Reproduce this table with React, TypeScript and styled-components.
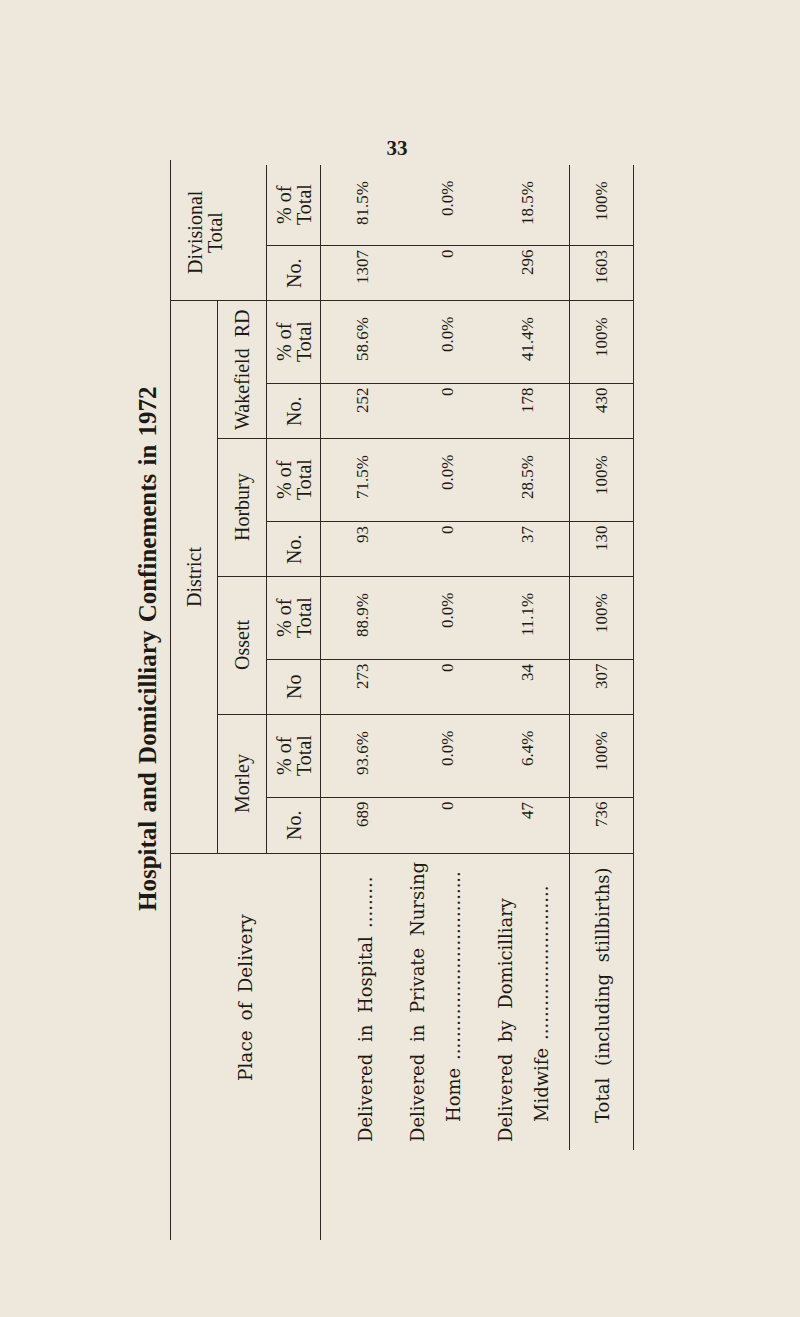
import React from "react";
import styled, { createGlobalStyle } from "styled-components";

const ink = "#1d1a16";
const rule = "1.5px solid #2d2823";

const GlobalStyle = createGlobalStyle`
  html, body {
    margin: 0;
    padding: 0;
    background: #eee8dc;
  }
  body {
    font-family: "Liberation Serif", "Times New Roman", serif;
    color: ${ink};
  }
`;

const Page = styled.div`
  width: 800px;
  height: 1317px;
  padding-top: 136px;
  box-sizing: border-box;
  background: #eee8dc;
  overflow: hidden;
`;

const PageNumber = styled.div`
  text-align: center;
  font-size: 21px;
  font-weight: 700;
  line-height: 24px;
  padding-right: 6px;
`;

// the printed table is turned on its side: vertical-rl + half turn reads bottom to top
const Sheet = styled.div`
  writing-mode: vertical-rl;
  transform: rotate(180deg);
  width: 515px;
  height: 1085px;
  margin-left: 125px;
`;

const Title = styled.h1`
  margin: 0;
  block-size: 45px;
  line-height: 45px;
  padding-inline-start: 107px;
  text-align: center;
  font-size: 25px;
  font-weight: 700;
  word-spacing: 2px;
  white-space: nowrap;
`;

const Table = styled.div`
  display: grid;
  grid-template-columns: 387px repeat(4, 56px 82px) 56px 80px;
  grid-template-rows: 47px 49px 54px 65px 90px 93px 65px;
  margin-inline-start: 5px;
  border-block-start: ${rule};
`;

const StubHead = styled.div`
  grid-column: 1;
  grid-row: 1 / 4;
  display: flex;
  align-items: center;
  justify-content: center;
  padding-inline-start: 98px;
  border-block-end: ${rule};
  border-inline-end: ${rule};
  font-family: "DejaVu Serif", serif;
  font-size: 18.5px;
  word-spacing: 4px;
`;

const DistrictHead = styled.div`
  grid-column: 2 / 10;
  grid-row: 1;
  display: flex;
  align-items: center;
  justify-content: center;
  border-block-end: ${rule};
  font-size: 20px;
`;

const DivisionHead = styled.div`
  grid-column: 10 / 12;
  grid-row: 1 / 3;
  padding-block-start: 14px;
  text-align: center;
  font-size: 20px;
  line-height: 20px;
  border-block-end: ${rule};
  border-inline-start: ${rule};
`;

const GroupName = styled.div<{ $col: number; $divide: boolean }>`
  grid-column: ${(p) => p.$col} / span 2;
  grid-row: 2;
  display: flex;
  align-items: center;
  justify-content: center;
  font-size: 20px;
  word-spacing: 6px;
  border-block-end: ${rule};
  border-inline-start: ${(p) => (p.$divide ? rule : "none")};
`;

const SubHead = styled.div<{ $col: number; $no: boolean; $divide: boolean }>`
  grid-column: ${(p) => p.$col};
  grid-row: 3;
  display: flex;
  align-items: center;
  justify-content: center;
  text-align: center;
  font-size: 20px;
  line-height: 20px;
  border-block-end: ${rule};
  border-inline-end: ${(p) => (p.$no ? rule : "none")};
  border-inline-start: ${(p) => (p.$divide ? rule : "none")};
`;

const Label = styled.div<{ $row: number; $pad: number }>`
  grid-column: 1;
  grid-row: ${(p) => p.$row};
  padding-inline-start: 98px;
  padding-inline-end: 8px;
  padding-block-start: ${(p) => p.$pad}px;
  border-inline-end: ${rule};
  font-family: "DejaVu Serif", serif;
  font-size: 18px;
  word-spacing: 6px;
`;

const TotalLabel = styled(Label)`
  margin-inline-start: 90px;
  padding-inline-start: 27px;
  border-block-start: ${rule};
  border-block-end: ${rule};
`;

const LabelLine = styled.div<{ $indent?: boolean }>`
  line-height: 36px;
  white-space: nowrap;
  padding-inline-start: ${(p) => (p.$indent ? 20 : 0)}px;
`;

const Leader = styled.span`
  margin-inline-start: 8px;
  letter-spacing: 0;
`;

const Figure = styled.div<{
  $row: number;
  $col: number;
  $no: boolean;
  $divide: boolean;
  $total: boolean;
  $pad: number;
}>`
  grid-column: ${(p) => p.$col};
  grid-row: ${(p) => p.$row};
  padding-block-start: ${(p) => p.$pad}px;
  padding-inline-end: ${(p) => (p.$no ? 4 : 16)}px;
  text-align: end;
  font-size: 17px;
  line-height: 24px;
  white-space: nowrap;
  border-inline-end: ${(p) => (p.$no ? rule : "none")};
  border-inline-start: ${(p) => (p.$divide ? rule : "none")};
  border-block-start: ${(p) => (p.$total ? rule : "none")};
  border-block-end: ${(p) => (p.$total ? rule : "none")};
`;

const groups = [
  { name: "Morley", no: "No." },
  { name: "Ossett", no: "No" },
  { name: "Horbury", no: "No." },
  { name: "Wakefield RD", no: "No." },
];

type Row = {
  lines: string[];
  dots: number;
  pad: number;
  figPad: number;
  values: string[][];
};

const rows: Row[] = [
  {
    lines: ["Delivered in Hospital"],
    dots: 9,
    pad: 27,
    figPad: 30,
    values: [
      ["689", "93.6%"],
      ["273", "88.9%"],
      ["93", "71.5%"],
      ["252", "58.6%"],
      ["1307", "81.5%"],
    ],
  },
  {
    lines: ["Delivered in Private Nursing", "Home"],
    dots: 33,
    pad: 14,
    figPad: 50,
    values: [
      ["0", "0.0%"],
      ["0", "0.0%"],
      ["0", "0.0%"],
      ["0", "0.0%"],
      ["0", "0.0%"],
    ],
  },
  {
    lines: ["Delivered by Domicilliary", "Midwife"],
    dots: 27,
    pad: 12,
    figPad: 40,
    values: [
      ["47", "6.4%"],
      ["34", "11.1%"],
      ["37", "28.5%"],
      ["178", "41.4%"],
      ["296", "18.5%"],
    ],
  },
];

const totals = [
  ["736", "100%"],
  ["307", "100%"],
  ["130", "100%"],
  ["430", "100%"],
  ["1603", "100%"],
];

const Figures = ({
  values,
  row,
  pad,
  total,
}: {
  values: string[][];
  row: number;
  pad: number;
  total: boolean;
}) => (
  <>
    {values.map(([no, pct], g) => (
      <React.Fragment key={g}>
        <Figure $row={row} $col={2 + g * 2} $no $divide={g > 0} $total={total} $pad={pad}>
          {no}
        </Figure>
        <Figure $row={row} $col={3 + g * 2} $no={false} $divide={false} $total={total} $pad={pad}>
          {pct}
        </Figure>
      </React.Fragment>
    ))}
  </>
);

const PercentHead = () => (
  <>
    % of
    <br />
    Total
  </>
);

export default function App() {
  return (
    <Page>
      <GlobalStyle />
      <PageNumber>33</PageNumber>
      <Sheet>
        <Title>Hospital and Domicilliary Confinements in 1972</Title>
        <Table>
          <StubHead>Place of Delivery</StubHead>
          <DistrictHead>District</DistrictHead>
          <DivisionHead>
            Divisional
            <br />
            Total
          </DivisionHead>

          {groups.map((g, i) => (
            <GroupName key={g.name} $col={2 + i * 2} $divide={i > 0}>
              {g.name}
            </GroupName>
          ))}

          {[...groups.map((g) => g.no), "No."].map((no, i) => (
            <React.Fragment key={i}>
              <SubHead $col={2 + i * 2} $no $divide={i > 0}>
                {no}
              </SubHead>
              <SubHead $col={3 + i * 2} $no={false} $divide={false}>
                <PercentHead />
              </SubHead>
            </React.Fragment>
          ))}

          {rows.map((r, i) => (
            <React.Fragment key={r.lines[0]}>
              <Label $row={4 + i} $pad={r.pad}>
                {r.lines.map((line, j) => {
                  const last = j === r.lines.length - 1;
                  return (
                    <LabelLine key={line} $indent={j > 0}>
                      {line}
                      {last && <Leader>{".".repeat(r.dots)}</Leader>}
                    </LabelLine>
                  );
                })}
              </Label>
              <Figures values={r.values} row={4 + i} pad={r.figPad} total={false} />
            </React.Fragment>
          ))}

          <TotalLabel $row={7} $pad={15}>
            <LabelLine>Total (including stillbirths)</LabelLine>
          </TotalLabel>
          <Figures values={totals} row={7} pad={20} total />
        </Table>
      </Sheet>
    </Page>
  );
}
